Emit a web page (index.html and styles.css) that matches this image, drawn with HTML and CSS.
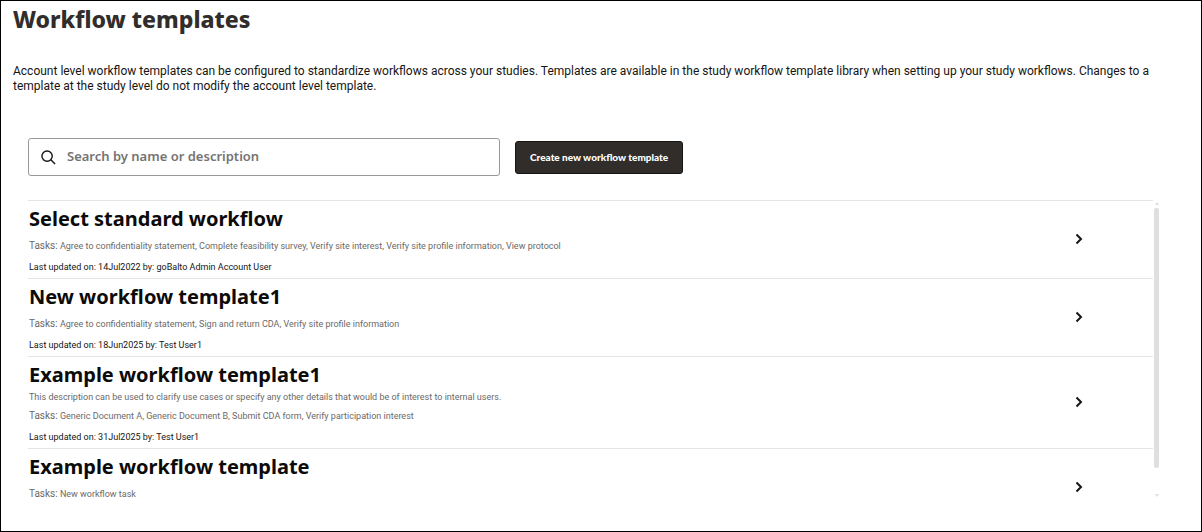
FILE: index.html
```html
<!DOCTYPE html>
<html lang="en">

<head>
  <meta charset="utf-8">
  <title>Workflow templates</title>
  <link rel="stylesheet" href="styles.css">
</head>

<body>
  <main class="page">
    <h1 class="page-title">Workflow templates</h1>
    <p class="intro">Account level workflow templates can be configured to standardize workflows across your studies. Templates are available in the study workflow template library when setting up your study workflows. Changes to a template at the study level do not modify the account level template.</p>

    <div class="toolbar">
      <label class="search">
        <svg class="search-icon" viewBox="0 0 16 16" aria-hidden="true">
          <circle cx="6.500" cy="6.500" r="5.500" />
          <path d="M10.500 10.500l4.500 4.500" />
        </svg>
        <input type="text" class="search-input" aria-label="Search by name or description" placeholder="Search by name or description">
      </label>
      <button class="create-btn">Create new workflow template</button>
    </div>

    <div class="list-wrap">
      <div class="list">
        <div class="template">
          <div class="details">
            <h2 class="name">Select standard workflow</h2>
            <p class="tasks"><span class="tasks-label">Tasks:</span> Agree to confidentiality statement, Complete feasibility survey, Verify site interest, Verify site profile information, View protocol</p>
            <p class="updated">Last updated on: 14Jul2022 by: goBalto Admin Account User</p>
          </div>
          <button class="open-btn" aria-label="Open Select standard workflow">
            <svg class="chevron" viewBox="0 0 8 12" aria-hidden="true"><path d="M1.500 1.500l4.500 4.500l-4.500 4.500" /></svg>
          </button>
        </div>
        <div class="template">
          <div class="details">
            <h2 class="name">New workflow template1</h2>
            <p class="tasks"><span class="tasks-label">Tasks:</span> Agree to confidentiality statement, Sign and return CDA, Verify site profile information</p>
            <p class="updated">Last updated on: 18Jun2025 by: Test User1</p>
          </div>
          <button class="open-btn" aria-label="Open New workflow template1">
            <svg class="chevron" viewBox="0 0 8 12" aria-hidden="true"><path d="M1.500 1.500l4.500 4.500l-4.500 4.500" /></svg>
          </button>
        </div>
        <div class="template">
          <div class="details">
            <h2 class="name">Example workflow template1</h2>
            <p class="description">This description can be used to clarify use cases or specify any other details that would be of interest to internal users.</p>
            <p class="tasks"><span class="tasks-label">Tasks:</span> Generic Document A, Generic Document B, Submit CDA form, Verify participation interest</p>
            <p class="updated">Last updated on: 31Jul2025 by: Test User1</p>
          </div>
          <button class="open-btn" aria-label="Open Example workflow template1">
            <svg class="chevron" viewBox="0 0 8 12" aria-hidden="true"><path d="M1.500 1.500l4.500 4.500l-4.500 4.500" /></svg>
          </button>
        </div>
        <div class="template last">
          <div class="details">
            <h2 class="name">Example workflow template</h2>
            <p class="tasks"><span class="tasks-label">Tasks:</span> New workflow task</p>
          </div>
          <button class="open-btn" aria-label="Open Example workflow template">
            <svg class="chevron" viewBox="0 0 8 12" aria-hidden="true"><path d="M1.500 1.500l4.500 4.500l-4.500 4.500" /></svg>
          </button>
        </div>
      </div>
      <div class="scrollbar" aria-hidden="true">
        <span class="arrow-up"></span>
        <span class="thumb"></span>
        <span class="arrow-down"></span>
      </div>
    </div>
  </main>
</body>

</html>
```

FILE: styles.css
```css
* {
  box-sizing: border-box;
}

body {
  margin: 0;
  background-color: #fff;
  color: #161513;
  font-family: Roboto, "Noto Sans", sans-serif;
}

h1,
h2,
p {
  margin: 0;
}

.page {
  display: flex;
  flex-direction: column;
  height: 100vh;
  padding: 2px 42px 29px 12px;
  border: 1px solid #000;
}

.page-title {
  font-family: "Noto Sans", sans-serif;
  font-size: 23px;
  line-height: 32px;
  font-weight: 800;
  color: #312d2a;
}

.intro {
  margin-top: 29px;
  font-size: 12px;
  line-height: 15px;
}

.toolbar {
  display: flex;
  align-items: center;
  gap: 15px;
  margin: 44px 0 24px 15px;
}

.search {
  display: flex;
  align-items: center;
  gap: 11px;
  width: 472px;
  height: 38px;
  padding: 0 12px;
  border: 1px solid #9a9896;
  border-radius: 3px;
}

.search-icon {
  width: 15px;
  height: 15px;
  fill: none;
  stroke: #161513;
  stroke-width: 1.5;
}

.search-input {
  flex: 1;
  padding: 0 0 2px;
  border: 0;
  outline: 0;
  background: none;
  font-family: "Noto Sans", sans-serif;
  font-size: 13px;
  font-weight: 600;
}

.search-input::placeholder {
  color: #757371;
}

.create-btn {
  height: 33px;
  padding: 0 14px;
  border: 1px solid #161513;
  border-radius: 3px;
  background-color: #312d2a;
  color: #fff;
  font-family: Lato, sans-serif;
  font-size: 10px;
  font-weight: 900;
}

.list-wrap {
  display: flex;
  flex: 1;
  gap: 1px;
  min-height: 0;
  margin-left: 15px;
}

.list {
  flex: 1;
  overflow: hidden;
}

.template {
  display: flex;
  align-items: center;
  justify-content: space-between;
  padding: 4px 70px 3px 1px;
  border-top: 1px solid #e6e5e4;
}

.last {
  min-height: 78px;
  align-items: flex-start;
}

.last .open-btn {
  align-self: center;
}

.name {
  font-family: "Noto Sans", sans-serif;
  font-size: 20px;
  line-height: 28px;
  font-weight: 700;
  color: #0c0b0a;
}

.description {
  font-size: 9px;
  line-height: 16px;
  color: #6b6967;
}

.tasks {
  margin-top: 5px;
  font-size: 9px;
  line-height: 16px;
  color: #6b6967;
}

.description + .tasks {
  margin-top: 3px;
}

.tasks-label {
  font-size: 10px;
  line-height: 10px;
}

.updated {
  margin-top: 5px;
  font-size: 9px;
  line-height: 16px;
}

.open-btn {
  display: flex;
  padding: 0 0 2px;
  border: 0;
  background: none;
}

.chevron {
  width: 8px;
  height: 12px;
  fill: none;
  stroke: #161513;
  stroke-width: 2;
}

.scrollbar {
  display: flex;
  flex-direction: column;
  align-items: center;
  gap: 3px;
  width: 5px;
  padding: 2px 0 5px;
}

.thumb {
  width: 5px;
  height: 88%;
  border-radius: 2px;
  background-color: #dfdfdf;
}

.arrow-up,
.arrow-down {
  border: 2px solid transparent;
}

.arrow-up {
  border-top: 0;
  border-bottom: 3px solid #dfdfdf;
}

.arrow-down {
  margin-top: auto;
  border-bottom: 0;
  border-top: 3px solid #dfdfdf;
}
```
